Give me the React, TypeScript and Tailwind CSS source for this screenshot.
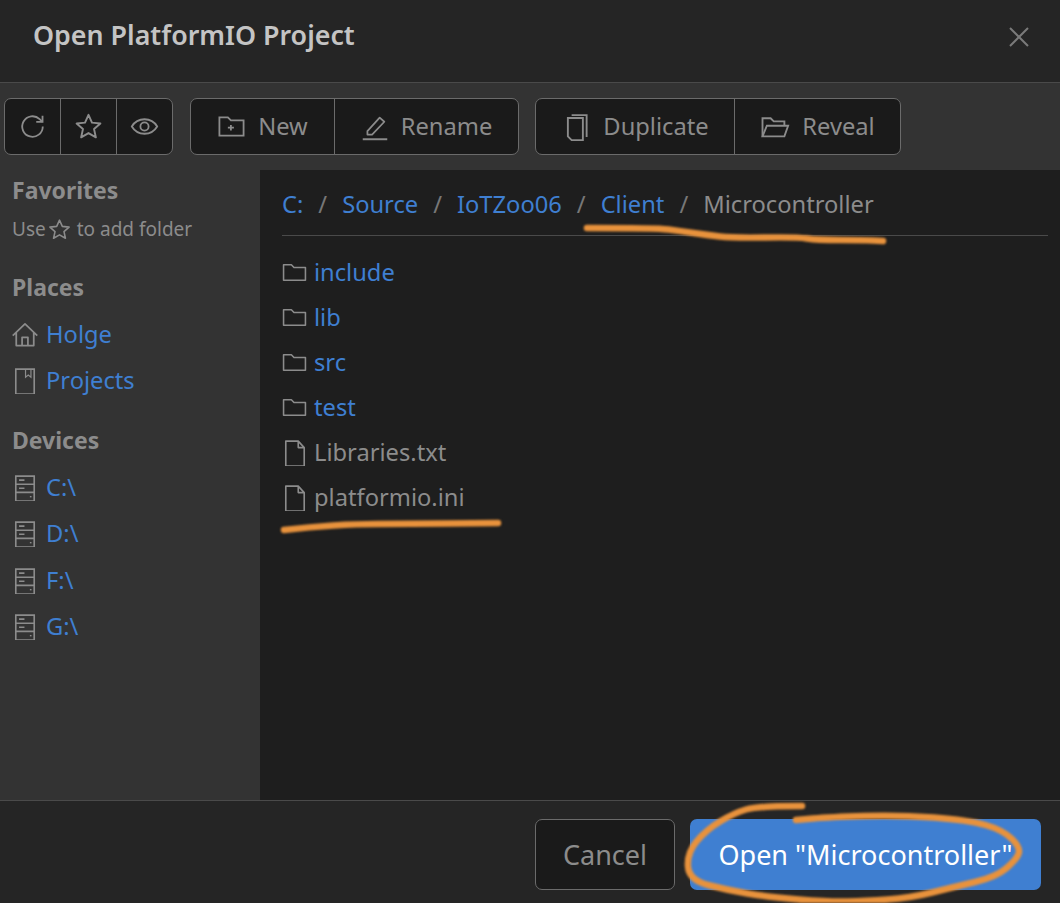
import React from "react";

const stroke = { fill: "none", stroke: "currentColor", strokeWidth: 1.5 } as const;

function Svg({ size = 26, children, className = "" }: { size?: number; children: React.ReactNode; className?: string }) {
  return (
    <svg width={size} height={size} viewBox="0 0 24 24" className={"shrink-0 " + className} {...stroke}>
      {children}
    </svg>
  );
}

const Refresh = () => (
  <Svg size={29}>
    <path d="M20.500 12a8.500 8.500 0 1 1-2.600-6.100L20.300 8.200" />
    <path d="M20.300 3v5.200h-5.200" />
  </Svg>
);
const Star = ({ size = 31, className = "" }: { size?: number; className?: string }) => (
  <Svg size={size} className={className}>
    <path d="M12 3l2.700 6 6.500.7-4.900 4.300 1.400 6.400L12 17.100 6.300 20.400l1.400-6.400L2.800 9.700 9.300 9z" strokeLinejoin="round" />
  </Svg>
);
const Eye = () => (
  <Svg size={29}>
    <path d="M1.500 12C4 7.800 7.600 6 12 6s8 1.800 10.500 6c-2.500 4.200-6.100 6-10.500 6s-8-1.800-10.500-6z" />
    <circle cx="12" cy="12" r="3.400" />
  </Svg>
);
const FolderPlus = () => (
  <Svg size={29}>
    <path d="M2 4.500h7l2.500 2.500H22v12.500H2z" />
    <path d="M9 13h5M11.500 10.700v4.600" />
  </Svg>
);
const Pencil = () => (
  <Svg size={28}>
    <path d="M5.500 15.500L16 4l4 3.500L9.500 18.500h-4z" strokeLinejoin="round" />
    <path d="M1.500 22.500h21" strokeWidth={1.700} />
  </Svg>
);
const Copy = () => (
  <Svg size={30}>
    <path d="M8.500 2.500h12v17.500" />
    <path d="M5.500 4.800h12v17.700H8.500l-3-3z" />
  </Svg>
);
const FolderOpen = () => (
  <Svg size={30}>
    <path d="M2 19.500V5h6.500L11 7.500h8.500V11" />
    <path d="M2 19.500L5.500 11h17l-3 8.500z" />
  </Svg>
);
const Home = () => (
  <Svg size={28}>
    <path d="M1.500 12.500L12 2.500l10.500 10M4.500 10v11h15V10M9.500 21v-7h5v7" strokeLinejoin="round" />
  </Svg>
);
const Book = () => (
  <Svg size={26}>
    <path d="M3.500 1h17v23h-17z" />
    <path d="M12.500 1v7.500l2.500-2 2.500 2V1" strokeWidth={1.100} />
  </Svg>
);
const Drive = () => (
  <Svg size={26}>
    <path d="M3.500 1h17v23h-17zM3.500 8.500h17M3.500 16h17" />
    <path d="M6.500 4.700h5M6.500 12.200h5" />
    <path d="M16.500 20h1.500" strokeWidth={1.300} />
  </Svg>
);
const Folder = () => (
  <Svg size={25}>
    <path d="M1.500 19.500V4.500h7.500l2.500 2.700h11v12.300z" strokeLinejoin="round" />
  </Svg>
);
const FileIcon = () => (
  <Svg size={26}>
    <path d="M3.500 1h11.500l5.500 6v17h-17zM15 1v6h5.500" strokeLinejoin="round" />
  </Svg>
);

function ToolBtn({ icon, label, width, border = true }: { icon: React.ReactNode; label?: string; width: string; border?: boolean }) {
  return (
    <div className={"flex items-center justify-center gap-[12px] h-full " + width + (border ? " border-r border-[#6b6b6b]" : "")}>
      {icon}
      {label ? <span className="text-[23.7px]">{label}</span> : null}
    </div>
  );
}

function Group({ children }: { children: React.ReactNode }) {
  return <div className="flex h-[57px] rounded-[7px] border border-[#6b6b6b] bg-[#1a1a1a] text-[#8c8c8c]">{children}</div>;
}

function Heading({ children, className = "" }: { children: React.ReactNode; className?: string }) {
  return <div className={"text-[23px] leading-[30px] font-bold text-[#8c8c8c] " + className}>{children}</div>;
}

function SideLink({ icon, label }: { icon: React.ReactNode; label: string }) {
  return (
    <div className="flex items-center h-[46.500px]">
      <div className="w-[27px] flex justify-center text-[#8c8c8c] -ml-[1px] mr-[8px]">{icon}</div>
      <span className="text-[23.7px] text-[#3f7fd1]">{label}</span>
    </div>
  );
}

function Row({ icon, label, link }: { icon: React.ReactNode; label: string; link?: boolean }) {
  return (
    <div className="flex items-center h-[45px]">
      <div className="w-[32px] flex text-[#8c8c8c]">{icon}</div>
      <span className={"text-[23.7px] " + (link ? "text-[#3f7fd1]" : "text-[#8c8c8c]")}>{label}</span>
    </div>
  );
}

function smooth(pts: number[][]) {
  let d = `M${pts[0][0]} ${pts[0][1]}`;
  for (let i = 1; i < pts.length - 1; i++) {
    const mx = (pts[i][0] + pts[i + 1][0]) / 2;
    const my = (pts[i][1] + pts[i + 1][1]) / 2;
    d += `Q${pts[i][0]} ${pts[i][1]} ${mx} ${my}`;
  }
  const l = pts[pts.length - 1];
  return d + `L${l[0]} ${l[1]}`;
}

const strokeA = [[587, 228], [657, 228], [680, 231], [707, 235], [733, 238], [797, 237], [817, 240], [863, 240], [883, 241]];
const strokeB = [[284, 530], [310, 527], [357, 524], [397, 524], [498, 523]];
const strokeC = [[802, 806], [758, 806], [734, 813], [706, 830], [687, 853], [689, 880], [727, 890], [768, 897], [830, 902], [865, 901], [910, 898], [954, 887], [996, 877], [1016, 860], [1021, 848], [1003, 830], [968, 820], [899, 815], [830, 817], [796, 820]];

export default function App() {
  return (
    <div className="relative w-[1060px] h-[903px] overflow-hidden flex flex-col bg-[#252525] font-['Noto_Sans','Open_Sans',sans-serif]">
      <header className="h-[83px] shrink-0 flex items-center justify-between pl-[33px] pr-[29px] pb-[12px] border-b border-[#4a4a4a] bg-[#252525]">
        <h1 className="text-[26.800px] font-semibold text-[#c4c4c4]">Open PlatformIO Project</h1>
        <svg width="24" height="24" viewBox="0 0 24 24" className="text-[#7a7a7a] mt-[4px]" fill="none" stroke="currentColor" strokeWidth="2">
          <path d="M3 3l18 18M21 3L3 21" />
        </svg>
      </header>

      <div className="h-[87px] shrink-0 bg-[#333333] flex items-center pl-[4px]">
        <Group>
          <ToolBtn width="w-[56px]" icon={<Refresh />} />
          <ToolBtn width="w-[56px]" icon={<Star />} />
          <ToolBtn width="w-[55px]" icon={<Eye />} border={false} />
        </Group>
        <div className="w-[17px]" />
        <Group>
          <ToolBtn width="w-[144px]" icon={<FolderPlus />} label="New" />
          <ToolBtn width="w-[183px]" icon={<Pencil />} label="Rename" border={false} />
        </Group>
        <div className="w-[16px]" />
        <Group>
          <ToolBtn width="w-[199px]" icon={<Copy />} label="Duplicate" />
          <ToolBtn width="w-[165px]" icon={<FolderOpen />} label="Reveal" border={false} />
        </Group>
      </div>

      <div className="flex-1 flex min-h-0">
        <aside className="w-[260px] shrink-0 bg-[#333333] pl-[12px] text-[#8c8c8c]">
          <Heading className="mt-[5px]">Favorites</Heading>
          <div className="flex items-center gap-[3px] text-[19px] h-[28px] mt-[10px]">
            Use <Star size={25} className="-ml-[2px] mr-[2px]" /> to add folder
          </div>
          <Heading className="mt-[29px] mb-[9.500px]">Places</Heading>
          <SideLink icon={<Home />} label="Holge" />
          <SideLink icon={<Book />} label="Projects" />
          <Heading className="mt-[20.500px] mb-[9.500px]">Devices</Heading>
          <SideLink icon={<Drive />} label="C:\" />
          <SideLink icon={<Drive />} label="D:\" />
          <SideLink icon={<Drive />} label="F:\" />
          <SideLink icon={<Drive />} label="G:\" />
        </aside>
        <main className="flex-1 bg-[#1e1e1e] pl-[22px] pr-[12px]">
          <nav className="h-[66px] flex items-center text-[23.7px] border-b border-[#4a4a4a] pt-[5px] mb-[14px] text-[#3f7fd1]">
            <span>C:</span>
            <span className="text-[#777777] mx-[15px]">/</span>
            <span>Source</span>
            <span className="text-[#777777] mx-[15px]">/</span>
            <span>IoTZoo06</span>
            <span className="text-[#777777] mx-[15px]">/</span>
            <span>Client</span>
            <span className="text-[#777777] mx-[15px]">/</span>
            <span className="text-[#8c8c8c]">Microcontroller</span>
          </nav>
          <Row icon={<Folder />} label="include" link />
          <Row icon={<Folder />} label="lib" link />
          <Row icon={<Folder />} label="src" link />
          <Row icon={<Folder />} label="test" link />
          <Row icon={<FileIcon />} label="Libraries.txt" />
          <Row icon={<FileIcon />} label="platformio.ini" />
        </main>
      </div>

      <footer className="h-[103px] shrink-0 border-t border-[#4a4a4a] bg-[#252525] flex items-center justify-end gap-[15px] pr-[19px] pt-[4px]">
        <button className="w-[140px] h-[71px] rounded-[7px] border border-[#6b6b6b] bg-[#1a1a1a] text-[#8c8c8c] text-[27px] pt-[2px]">Cancel</button>
        <button className="w-[351px] h-[71px] rounded-[7px] bg-[#3f7fd1] text-white text-[27px] pt-[2px]">Open "Microcontroller"</button>
      </footer>

      <svg className="absolute inset-0 pointer-events-none blur-[0.8px]" width="1060" height="903" fill="none" stroke="#e8923c" strokeLinecap="round" strokeLinejoin="round" strokeWidth="6.500">
        <path d={smooth(strokeA)} />
        <path d={smooth(strokeB)} />
        <path d={smooth(strokeC)} />
      </svg>
    </div>
  );
}
